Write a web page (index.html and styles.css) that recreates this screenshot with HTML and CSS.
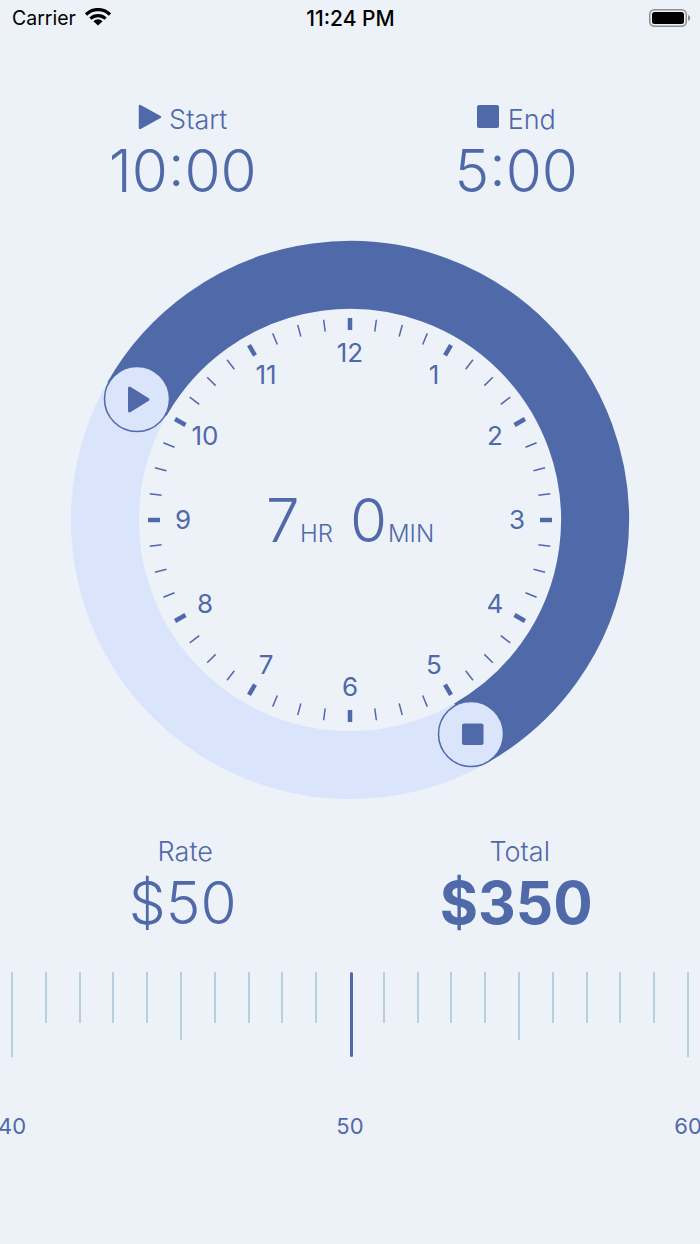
FILE: index.html
```html
<!DOCTYPE html>
<html lang="en">
<head>
    <meta charset="UTF-8">
    <title>Rate clock</title>
    <link rel="stylesheet" href="styles.css">
</head>
<body>
    <div class="status">
        <div class="status-left">
            <span>Carrier</span>
            <svg class="wifi" width="26" height="18" viewBox="0 0 26 18">
                <path d="M1 6.5 A17 17 0 0 1 25 6.5" fill="none" stroke="#000" stroke-width="3.2"/>
                <path d="M5.4 10.6 A11 11 0 0 1 20.6 10.6" fill="none" stroke="#000" stroke-width="3.2"/>
                <path d="M13 17.6 L8.4 13.2 A6.6 6.6 0 0 1 17.6 13.2 Z" fill="#000"/>
            </svg>
        </div>
        <div class="status-time">11:24 PM</div>
        <div class="status-right">
            <svg width="42" height="18" viewBox="0 0 42 18">
                <rect x="0.75" y="0.75" width="36.5" height="16.5" rx="4.5" fill="none" stroke="#8e8e8e" stroke-width="1.5"/>
                <rect x="3" y="3" width="32" height="12" rx="2.5" fill="#000"/>
                <path d="M39 6 C40.5 6.5 41.2 7.6 41.2 9 C41.2 10.4 40.5 11.5 39 12 Z" fill="#8e8e8e"/>
            </svg>
        </div>
    </div>

    <div class="stats times">
        <div class="stat">
            <div class="label">
                <svg class="label-icon" width="24" height="28" viewBox="0 0 24 28">
                    <path d="M2 3 L22 14 L2 25 Z" fill="#5069a8" stroke="#5069a8" stroke-width="2.5" stroke-linejoin="round"/>
                </svg>
                <span>Start</span>
            </div>
            <div class="value">10:00</div>
        </div>
        <div class="stat">
            <div class="label">
                <div class="stop-icon"></div>
                <span>End</span>
            </div>
            <div class="value">5:00</div>
        </div>
    </div>

    <svg class="dial" width="700" height="570" viewBox="-350 -285 700 570">
        <defs>
            <line id="minor" x1="0" y1="-202" x2="0" y2="-190" class="tick-minor"/>
            <line id="major" x1="0" y1="-202" x2="0" y2="-190" class="tick-major"/>
        </defs>
        <circle r="245" class="track"/>
        <path d="M -213 -121 A 245 245 0 1 1 121 213" class="arc"/>

        <use href="#major"/>
        <use href="#minor" transform="rotate(7.5)"/>
        <use href="#minor" transform="rotate(15)"/>
        <use href="#minor" transform="rotate(22.5)"/>
        <use href="#major" transform="rotate(30)"/>
        <use href="#minor" transform="rotate(37.5)"/>
        <use href="#minor" transform="rotate(45)"/>
        <use href="#minor" transform="rotate(52.5)"/>
        <use href="#major" transform="rotate(60)"/>
        <use href="#minor" transform="rotate(67.5)"/>
        <use href="#minor" transform="rotate(75)"/>
        <use href="#minor" transform="rotate(82.5)"/>
        <use href="#major" transform="rotate(90)"/>
        <use href="#minor" transform="rotate(97.5)"/>
        <use href="#minor" transform="rotate(105)"/>
        <use href="#minor" transform="rotate(112.5)"/>
        <use href="#major" transform="rotate(120)"/>
        <use href="#minor" transform="rotate(127.5)"/>
        <use href="#minor" transform="rotate(135)"/>
        <use href="#minor" transform="rotate(142.5)"/>
        <use href="#major" transform="rotate(150)"/>
        <use href="#minor" transform="rotate(157.5)"/>
        <use href="#minor" transform="rotate(165)"/>
        <use href="#minor" transform="rotate(172.5)"/>
        <use href="#major" transform="rotate(180)"/>
        <use href="#minor" transform="rotate(187.5)"/>
        <use href="#minor" transform="rotate(195)"/>
        <use href="#minor" transform="rotate(202.5)"/>
        <use href="#major" transform="rotate(210)"/>
        <use href="#minor" transform="rotate(217.5)"/>
        <use href="#minor" transform="rotate(225)"/>
        <use href="#minor" transform="rotate(232.5)"/>
        <use href="#major" transform="rotate(240)"/>
        <use href="#minor" transform="rotate(247.5)"/>
        <use href="#minor" transform="rotate(255)"/>
        <use href="#minor" transform="rotate(262.5)"/>
        <use href="#major" transform="rotate(270)"/>
        <use href="#minor" transform="rotate(277.5)"/>
        <use href="#minor" transform="rotate(285)"/>
        <use href="#minor" transform="rotate(292.5)"/>
        <use href="#major" transform="rotate(300)"/>
        <use href="#minor" transform="rotate(307.5)"/>
        <use href="#minor" transform="rotate(315)"/>
        <use href="#minor" transform="rotate(322.5)"/>
        <use href="#major" transform="rotate(330)"/>
        <use href="#minor" transform="rotate(337.5)"/>
        <use href="#minor" transform="rotate(345)"/>
        <use href="#minor" transform="rotate(352.5)"/>

        <text x="0" y="-158" class="hour">12</text>
        <text x="84" y="-136" class="hour">1</text>
        <text x="145" y="-75" class="hour">2</text>
        <text x="167" y="9" class="hour">3</text>
        <text x="145" y="93" class="hour">4</text>
        <text x="84" y="154" class="hour">5</text>
        <text x="0" y="176" class="hour">6</text>
        <text x="-84" y="154" class="hour">7</text>
        <text x="-145" y="93" class="hour">8</text>
        <text x="-167" y="9" class="hour">9</text>
        <text x="-145" y="-75" class="hour">10</text>
        <text x="-84" y="-136" class="hour">11</text>

        <text x="-84" y="22" class="dur-num">7</text>
        <text x="-50" y="22" class="dur-unit">HR</text>
        <text x="0" y="22" class="dur-num">0</text>
        <text x="38" y="22" class="dur-unit">MIN</text>

        <circle cx="-213" cy="-121" r="32.5" class="handle"/>
        <path d="M -220.5 -132 L -202 -120.5 L -220.5 -109 Z" class="handle-icon"/>
        <circle cx="121" cy="214" r="32.5" class="handle"/>
        <rect x="112" y="203.5" width="21.5" height="21.5" rx="2" class="handle-stop"/>
    </svg>

    <div class="stats rates">
        <div class="stat">
            <div class="label label-rate">Rate</div>
            <div class="value value-money">$50</div>
        </div>
        <div class="stat">
            <div class="label label-total">Total</div>
            <div class="value value-money value-bold">$350</div>
        </div>
    </div>

    <div class="ruler">
        <div class="rule rule-long"></div>
        <div class="rule"></div>
        <div class="rule"></div>
        <div class="rule"></div>
        <div class="rule"></div>
        <div class="rule rule-mid"></div>
        <div class="rule"></div>
        <div class="rule"></div>
        <div class="rule"></div>
        <div class="rule"></div>
        <div class="rule rule-now"></div>
        <div class="rule"></div>
        <div class="rule"></div>
        <div class="rule"></div>
        <div class="rule"></div>
        <div class="rule rule-mid"></div>
        <div class="rule"></div>
        <div class="rule"></div>
        <div class="rule"></div>
        <div class="rule"></div>
        <div class="rule rule-long"></div>
    </div>
    <div class="ruler-labels">
        <span>40</span>
        <span>50</span>
        <span>60</span>
    </div>
</body>
</html>
```

FILE: styles.css
```css
* {
    margin: 0;
    padding: 0;
    box-sizing: border-box;
}
html, body {
    width: 700px;
    height: 1244px;
    overflow: hidden;
}
body {
    background: #edf2f9;
    color: #5069a8;
    font-family: Inter, "Liberation Sans", sans-serif;
}

.status {
    height: 36px;
    padding: 0 9px 0 12px;
    display: grid;
    grid-template-columns: 1fr auto 1fr;
    align-items: center;
    color: #000;
    font-size: 19.5px;
}
.status-left {
    display: flex;
    align-items: center;
    gap: 9px;
}
.status-time {
    margin-right: 2px;
    font-weight: 500;
    font-size: 21px;
}
.status-right {
    display: flex;
    justify-content: flex-end;
}
.wifi {
    margin-top: -3px;
}

.stats {
    display: grid;
    grid-template-columns: 1fr 1fr;
    padding: 0 17px 0 16px;
}
.stat {
    display: flex;
    flex-direction: column;
    align-items: center;
}
.label {
    display: flex;
    align-items: center;
    gap: 7px;
    height: 30px;
    padding-top: 2px;
    font-size: 27px;
    font-weight: 350;
}
.value {
    font-size: 58.5px;
    font-weight: 270;
    line-height: 76px;
}

.times {
    margin-top: 67px;
}
.label-icon {
    margin-top: -5px;
}
.stop-icon {
    width: 22px;
    height: 23px;
    margin: -6px 2px 0 0;
    border-radius: 2px;
    background: #5069a8;
}

.dial {
    display: block;
    margin-top: 26px;
}
.track {
    fill: none;
    stroke: #dae4fb;
    stroke-width: 68;
}
.arc {
    fill: none;
    stroke: #5069a8;
    stroke-width: 68;
}
.tick-minor {
    stroke: #5069a8;
    stroke-width: 1.5;
}
.tick-major {
    stroke: #5069a8;
    stroke-width: 4.5;
}
.hour {
    fill: #5069a8;
    font-size: 26px;
    font-weight: 370;
    text-anchor: middle;
}
.dur-num {
    fill: #5069a8;
    font-size: 60px;
    font-weight: 270;
}
.dur-unit {
    fill: #5069a8;
    font-size: 24px;
    font-weight: 300;
}
.handle {
    fill: #dae4fb;
    stroke: #5069a8;
    stroke-width: 1.5;
}
.handle-icon {
    fill: #5069a8;
    stroke: #5069a8;
    stroke-width: 3;
    stroke-linejoin: round;
}
.handle-stop {
    fill: #5069a8;
}

.rates {
    margin-top: 30px;
}
.label-rate {
    padding-left: 5px;
}
.label-total {
    padding-left: 7px;
}
.value-money {
    line-height: 76px;
}
.value-bold {
    font-weight: 700;
}

.ruler {
    display: flex;
    gap: 31.8px;
    height: 85px;
    margin: 31px 0 0 11px;
}
.rule {
    flex: none;
    width: 2px;
    height: 51px;
    background: #b8cfdd;
}
.rule-mid {
    height: 68px;
}
.rule-long {
    height: 85px;
}
.rule-now {
    width: 3.5px;
    height: 85px;
    margin: 0 -2.5px 0 1px;
    border-radius: 2px;
    background: #5069a8;
}

.ruler-labels {
    display: flex;
    justify-content: space-between;
    margin: 56px -18px 0;
    font-size: 22px;
    font-weight: 400;
}
.ruler-labels span {
    width: 60px;
    text-align: center;
}
```
